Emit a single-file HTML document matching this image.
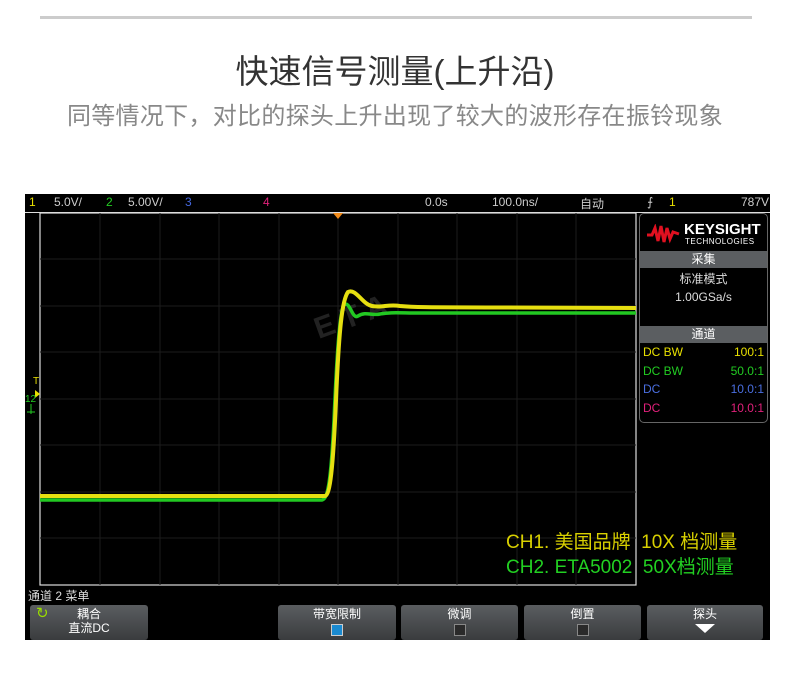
<!DOCTYPE html>
<html><head><meta charset="utf-8"><style>
*{margin:0;padding:0;box-sizing:border-box}
body{width:790px;height:675px;background:#fff;position:relative;overflow:hidden;font-family:"Liberation Sans","Noto Sans CJK SC",sans-serif}
.abs{position:absolute}
.t{white-space:nowrap}
.btn{position:absolute;top:605px;height:35px;background:linear-gradient(#5a5d60,#3a3c3e);border-radius:3px;color:#fff;font-size:12px;text-align:center;line-height:14px;padding-top:2px}
.chk{display:inline-block;width:12px;height:12px;border:1px solid #888;background:#2a2a2a;margin-top:3px}
</style></head><body>
<div class="abs" style="left:40px;top:16px;width:712px;height:3px;background:#ccc"></div>
<div class="abs t" style="left:0;width:790px;top:45px;text-align:center;font-size:33px;color:#333">快速信号测量(上升沿)</div>
<div class="abs t" style="left:0;width:790px;top:96px;text-align:center;font-size:24px;letter-spacing:0.3px;color:#888">同等情况下，对比的探头上升出现了较大的波形存在振铃现象</div>

<div class="abs" style="left:25px;top:194px;width:745px;height:446px;background:#000"></div>
<div class="abs" style="left:25px;top:212px;width:745px;height:1px;background:#ddd"></div>
<div class="abs t" style="left:25px;top:195px;font-size:12px;color:#ccc">
<span class="abs" style="left:4px;color:#e8e000">1</span>
<span class="abs" style="left:29px">5.0V/</span>
<span class="abs" style="left:81px;color:#2c2">2</span>
<span class="abs" style="left:103px">5.00V/</span>
<span class="abs" style="left:160px;color:#46d">3</span>
<span class="abs" style="left:238px;color:#e0207a">4</span>
<span class="abs" style="left:400px">0.0s</span>
<span class="abs" style="left:467px">100.0ns/</span>
<span class="abs" style="left:555px">自动</span>
<span class="abs" style="left:622px">⨍</span>
<span class="abs" style="left:644px;color:#e8e000">1</span>
<span class="abs" style="left:716px">787V</span>
</div>

<svg class="abs" style="left:25px;top:213px" width="745" height="380" viewBox="25 213 745 380">
<rect x="40" y="213" width="596" height="372" fill="#000" stroke="#ddd" stroke-width="1.2"/>
<g stroke="#1c1c1c" stroke-width="1">
<line x1="100" y1="213" x2="100" y2="585"/><line x1="160" y1="213" x2="160" y2="585"/><line x1="219" y1="213" x2="219" y2="585"/><line x1="279" y1="213" x2="279" y2="585"/><line x1="338" y1="213" x2="338" y2="585"/><line x1="398" y1="213" x2="398" y2="585"/><line x1="457" y1="213" x2="457" y2="585"/><line x1="517" y1="213" x2="517" y2="585"/><line x1="576" y1="213" x2="576" y2="585"/>
<line x1="40" y1="259" x2="636" y2="259"/><line x1="40" y1="306" x2="636" y2="306"/><line x1="40" y1="352" x2="636" y2="352"/><line x1="40" y1="399" x2="636" y2="399"/><line x1="40" y1="445" x2="636" y2="445"/><line x1="40" y1="492" x2="636" y2="492"/><line x1="40" y1="538" x2="636" y2="538"/>
</g>
<polygon points="333,213 343,213 338,219" fill="#f08a1a"/>
<text x="310" y="330" font-size="30" font-weight="bold" fill="#444" opacity="0.5" transform="rotate(-20 340 310)" font-family="Liberation Sans">E T A</text>
<path d="M40,500 L322,500 C328,499 331,480 334,420 C337,350 340,310 344,305 C350,300 352,320 358,316 C366,311 372,316 380,314 C390,312 400,313 420,313 L636,313" stroke="#22c822" stroke-width="3.5" fill="none"/>
<path d="M40,496 L325,496 C330,495 333,470 336,400 C339,330 342,300 348,292 C356,288 362,304 372,306 C382,308 388,304 400,306 C420,308 440,307 636,308" stroke="#e6df10" stroke-width="4" fill="none"/>
<text x="33" y="384" font-size="10" fill="#e8e000">T</text>
<polygon points="35,390 40,394 35,398" fill="#e8e000"/>
<text x="25" y="402" font-size="10" fill="#2c2">12</text>
<line x1="31" y1="404" x2="31" y2="414" stroke="#2c2"/>
<line x1="27" y1="412" x2="35" y2="412" stroke="#2c2"/>
</svg>

<div class="abs t" style="left:506px;top:527px;font-size:19px;color:#d8d000;font-family:'Liberation Sans','Noto Sans CJK SC',sans-serif">CH1. 美国品牌&nbsp; 10X 档测量</div>
<div class="abs t" style="left:506px;top:552px;font-size:19px;color:#22d022;font-family:'Liberation Sans','Noto Sans CJK SC',sans-serif">CH2. ETA5002&nbsp; 50X档测量</div>

<div class="abs" style="left:639px;top:213px;width:129px;height:210px;border:1px solid #666;border-radius:5px;background:#000;overflow:hidden">
 <div style="height:37px;position:relative">
  <svg class="abs" style="left:6px;top:10px" width="34" height="20"><path d="M1,11 L6,11 L9,4 L12,17 L15,2 L18,18 L21,4 L24,15 L27,8 L33,10" stroke="#e01020" stroke-width="3" fill="none"/></svg>
  <div class="abs t" style="left:44px;top:7px;font-size:15px;color:#fff;font-weight:bold">KEYSIGHT</div>
  <div class="abs t" style="left:45px;top:23px;font-size:8px;color:#fff;letter-spacing:0.5px">TECHNOLOGIES</div>
 </div>
 <div style="height:17px;background:#5b5e61;color:#fff;font-size:12px;text-align:center;line-height:17px">采集</div>
 <div style="height:58px;color:#ddd;font-size:12px;text-align:center;line-height:18px;padding-top:2px">标准模式<br>1.00GSa/s</div>
 <div style="height:17px;background:#5b5e61;color:#fff;font-size:12px;text-align:center;line-height:17px">通道</div>
 <div style="font-size:12px;line-height:18.5px;padding:0 3px">
  <div style="color:#e8e000;display:flex;justify-content:space-between"><span>DC BW</span><span>100:1</span></div>
  <div style="color:#2c2;display:flex;justify-content:space-between"><span>DC BW</span><span>50.0:1</span></div>
  <div style="color:#4a6ee0;display:flex;justify-content:space-between"><span>DC</span><span>10.0:1</span></div>
  <div style="color:#e0207a;display:flex;justify-content:space-between"><span>DC</span><span>10.0:1</span></div>
 </div>
</div>

<div class="abs t" style="left:28px;top:587px;font-size:12px;color:#ddd">通道 2 菜单</div>
<div class="btn" style="left:30px;width:118px"><span class="abs" style="left:6px;top:2px;color:#9d0;font-size:15px">↻</span>耦合<br>直流DC</div>
<div class="btn" style="left:278px;width:118px">带宽限制<br><span class="chk" style="background:#1a8ad0;border-color:#ccc"></span></div>
<div class="btn" style="left:401px;width:117px">微调<br><span class="chk"></span></div>
<div class="btn" style="left:524px;width:117px">倒置<br><span class="chk"></span></div>
<div class="btn" style="left:647px;width:116px">探头<br><span style="display:inline-block;margin-top:3px;width:0;height:0;border-left:10px solid transparent;border-right:10px solid transparent;border-top:9px solid #fff"></span></div>
</body></html>
